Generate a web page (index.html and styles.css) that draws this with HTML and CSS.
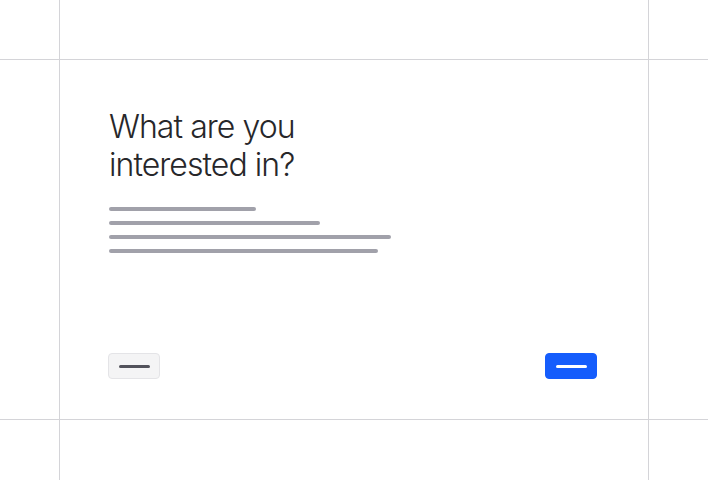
FILE: index.html
```html
<!DOCTYPE html>
<html>
<head>
<meta charset="utf-8">
<link rel="stylesheet" href="styles.css">
</head>
<body>
<div class="frame">
  <div class="cell"></div><div class="vline"></div><div class="cell"></div><div class="vline"></div><div class="cell"></div>
  <div class="hline"></div><div class="cross"></div><div class="hline"></div><div class="cross"></div><div class="hline"></div>
  <div class="cell"></div><div class="vline"></div>
  <div class="card">
    <div class="header">
      <h1 class="title">What are you<br>interested in?</h1>
      <div class="bars">
        <div class="bar b1"></div>
        <div class="bar b2"></div>
        <div class="bar b3"></div>
        <div class="bar b4"></div>
      </div>
    </div>
    <div class="actions">
      <button class="btn btn-secondary"><span class="btn-label"></span></button>
      <button class="btn btn-primary"><span class="btn-label"></span></button>
    </div>
  </div>
  <div class="vline"></div><div class="cell"></div>
  <div class="hline"></div><div class="cross"></div><div class="hline"></div><div class="cross"></div><div class="hline"></div>
  <div class="cell"></div><div class="vline"></div><div class="cell"></div><div class="vline"></div><div class="cell"></div>
</div>
</body>
</html>
```

FILE: styles.css
```css
html, body {
  margin: 0;
  padding: 0;
  background: #ffffff;
}
body {
  font-family: "Inter", "Liberation Sans", sans-serif;
}
.frame {
  display: grid;
  grid-template-columns: 59px 1px 588px 1px 59px;
  grid-template-rows: 59px 1px 359px 1px 60px;
  width: 708px;
  height: 480px;
}
.vline, .hline, .cross {
  background: #d4d4d8;
}
.card {
  display: flex;
  flex-direction: column;
  padding: 48px 51px 40px 48px;
  box-sizing: border-box;
}
.header {
  padding-left: 1px;
}
.title {
  margin: 0;
  font-size: 32px;
  line-height: 38.4px;
  font-weight: 300;
  color: #27272a;
  letter-spacing: -0.95px;
}
.bars {
  display: flex;
  flex-direction: column;
  gap: 10px;
  margin-top: 22px;
}
.bar {
  height: 4px;
  border-radius: 2px;
  background: #a1a1aa;
}
.b1 { width: 147px; }
.b2 { width: 211px; }
.b3 { width: 282px; }
.b4 { width: 269px; }
.actions {
  margin-top: auto;
  display: flex;
  justify-content: space-between;
  align-items: center;
}
.btn {
  width: 52px;
  height: 26px;
  padding: 0;
  border-radius: 4px;
  display: flex;
  align-items: center;
  justify-content: center;
  box-sizing: border-box;
}
.btn-secondary {
  background: #f4f4f5;
  border: 1px solid #e4e4e7;
}
.btn-primary {
  background: #155dfc;
  border: 1px solid #155dfc;
}
.btn-label {
  display: block;
  width: 31px;
  height: 3px;
  border-radius: 2px;
}
.btn-secondary .btn-label { background: #52525b; }
.btn-primary .btn-label { background: #ffffff; }
```
